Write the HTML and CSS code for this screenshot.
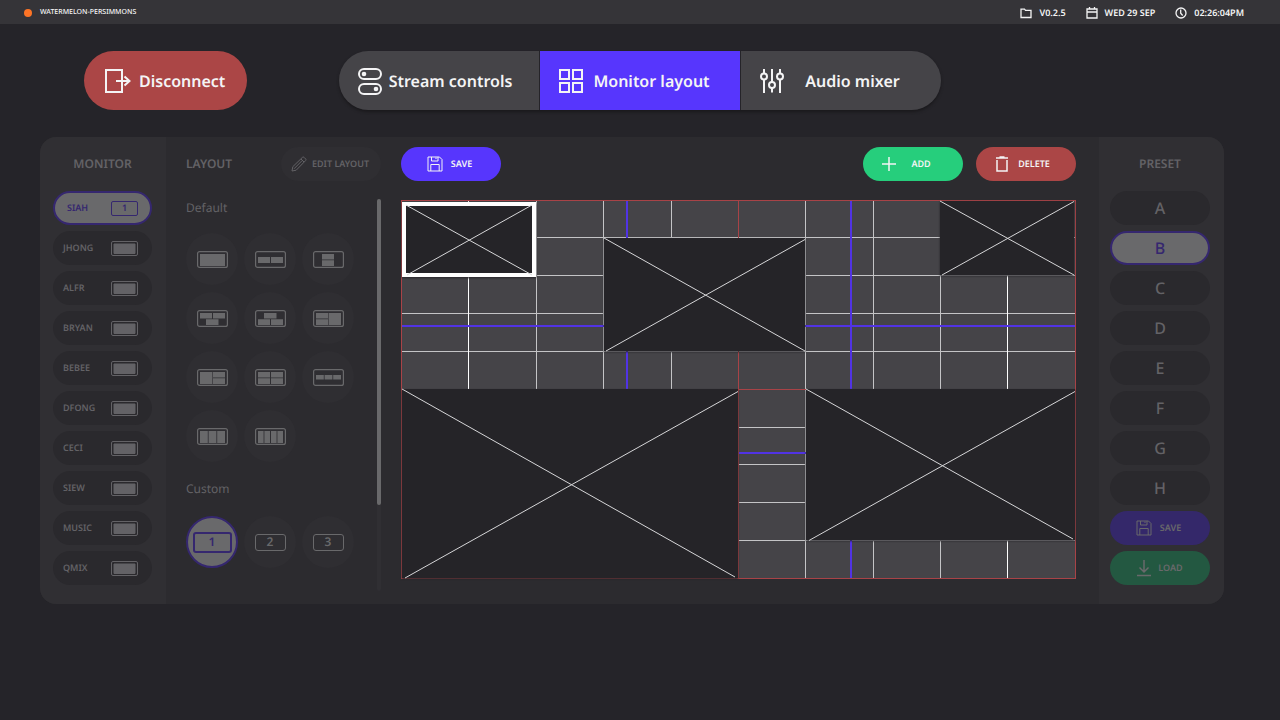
FILE: index.html
```html
<!DOCTYPE html>
<html lang="en">
<head>
<meta charset="utf-8">
<meta name="viewport" content="width=device-width, initial-scale=1">
<title>Monitor layout</title>
<link rel="stylesheet" href="styles.css">
</head>
<body>
<svg class="sprite" aria-hidden="true">
  <symbol id="screen" viewBox="0 0 27 15"><rect x=".5" y=".5" width="26" height="14" rx="1.5" fill="none" stroke="currentColor"/><path d="M3 3h21v9.500H3z" fill="currentColor"/></symbol>
  <symbol id="frame" viewBox="0 0 31 17"><rect x=".6" y=".6" width="29.800" height="15.800" rx="2" fill="none" stroke="currentColor" stroke-width="1.200"/></symbol>
  <symbol id="save" viewBox="0 0 16 16"><path d="M1 1h11.500L15 3.500V15H1zM4.500 1v4h6.500V1M9 1.500v1.500M3.800 15V8.500h8.400V15" fill="none" stroke="currentColor"/></symbol>
  <symbol id="pencil" viewBox="0 0 16 16"><path d="M1 15l.8-4.300L11.500 1.300q.8-.6 1.500 0l1.700 1.700q.7.8 0 1.500L5.200 14.200zM10 3l3 3M11.200 4.500L3 12.800" fill="none" stroke="currentColor"/></symbol>
</svg>

<header class="topbar">
  <span class="dot"></span>
  <span class="room">WATERMELON-PERSIMMONS</span>
  <span class="status"><svg width="12" height="12" viewBox="0 0 12 12"><path d="M1 2.200h3.500l1 1.200H11v7.100H1z"/></svg>V0.2.5</span>
  <span class="status"><svg width="12" height="12" viewBox="0 0 12 12"><path d="M1 2h10v9H1zM1 5h10M3.500 0v2M8.500 0v2"/></svg>WED 29 SEP</span>
  <span class="status"><svg width="12" height="12" viewBox="0 0 12 12"><circle cx="6" cy="6" r="5"/><path d="M5.700 2.500v3.700l2 2.300"/></svg>02:26:04PM</span>
</header>

<div class="actions">
  <button class="disconnect" type="button"><svg width="26" height="26" viewBox="0 0 26 26"><path d="M1 2h16v22H1zM11 13h13.500M19.500 8.500L24.500 13l-5 4.500"/></svg>Disconnect</button>
  <nav class="tabs">
    <button class="tab" type="button"><svg width="24" height="28" viewBox="0 0 24 28"><rect x="1" y="2" width="22" height="10" rx="5"/><rect x="1" y="17" width="22" height="10" rx="5"/><circle class="solid" cx="6" cy="7" r="2.300"/><circle class="solid" cx="18" cy="22" r="2.300"/></svg><span>Stream controls</span></button>
    <button class="tab active" type="button"><svg width="24" height="24" viewBox="0 0 24 24"><path d="M1 1h9v9H1zM14 1h9v9h-9zM1 14h9v9H1zM14 14h9v9h-9z"/></svg><span>Monitor layout</span></button>
    <button class="tab" type="button"><svg width="24" height="26" viewBox="0 0 24 26"><path d="M4 1v4.500M4 11.500V25M12 1v13M12 20v4.500M20 1v4.500M20 11.500V25"/><circle cx="4" cy="8.500" r="3"/><circle cx="12" cy="17" r="3"/><circle cx="20" cy="8.500" r="3"/></svg><span>Audio mixer</span></button>
  </nav>
</div>

<main class="panel">
  <section class="side monitors">
    <h2>MONITOR</h2>
    <button class="pill selected" type="button">SIAH<span class="number">1</span></button>
    <button class="pill" type="button">JHONG<svg width="27" height="15"><use href="#screen"/></svg></button>
    <button class="pill" type="button">ALFR<svg width="27" height="15"><use href="#screen"/></svg></button>
    <button class="pill" type="button">BRYAN<svg width="27" height="15"><use href="#screen"/></svg></button>
    <button class="pill" type="button">BEBEE<svg width="27" height="15"><use href="#screen"/></svg></button>
    <button class="pill" type="button">DFONG<svg width="27" height="15"><use href="#screen"/></svg></button>
    <button class="pill" type="button">CECI<svg width="27" height="15"><use href="#screen"/></svg></button>
    <button class="pill" type="button">SIEW<svg width="27" height="15"><use href="#screen"/></svg></button>
    <button class="pill" type="button">MUSIC<svg width="27" height="15"><use href="#screen"/></svg></button>
    <button class="pill" type="button">QMIX<svg width="27" height="15"><use href="#screen"/></svg></button>
  </section>

  <section class="layouts">
    <div class="layouts-head">
      <h2>LAYOUT</h2>
      <button class="btn edit" type="button"><svg width="16" height="16"><use href="#pencil"/></svg><span>EDIT LAYOUT</span></button>
    </div>
    <div class="layouts-body">
      <div class="groups">
        <h3>Default</h3>
        <div class="choices">
          <button class="choice" type="button" aria-label="Full screen"><svg width="31" height="17"><use href="#frame"/><path d="M3 3h25v12H3z"/></svg></button>
          <button class="choice" type="button" aria-label="Two side by side"><svg width="31" height="17"><use href="#frame"/><path d="M3 6h12v6H3zM16 6h12v6H16z"/></svg></button>
          <button class="choice" type="button" aria-label="Two stacked"><svg width="31" height="17"><use href="#frame"/><path d="M9 3h12v5.500H9zM9 9.200h12V15H9z"/></svg></button>
          <button class="choice" type="button" aria-label="Two over one"><svg width="31" height="17"><use href="#frame"/><path d="M3 3h12v5.500H3zM16 3h12v5.500H16zM9 9.200h12.500V15H9z"/></svg></button>
          <button class="choice" type="button" aria-label="One over two"><svg width="31" height="17"><use href="#frame"/><path d="M9 3h12.500v5.500H9zM3 9.200h12V15H3zM16 9.200h12V15H16z"/></svg></button>
          <button class="choice" type="button" aria-label="Two left, one right"><svg width="31" height="17"><use href="#frame"/><path d="M3 3h12v5.500H3zM3 9.200h12V15H3zM15.600 3H28v12H15.600z"/></svg></button>
          <button class="choice" type="button" aria-label="One left, two right"><svg width="31" height="17"><use href="#frame"/><path d="M3 3h12.400v12H3zM16 3h12v5.500H16zM16 9.200h12V15H16z"/></svg></button>
          <button class="choice" type="button" aria-label="Two by two"><svg width="31" height="17"><use href="#frame"/><path d="M3 3h12v5.500H3zM3 9.200h12V15H3zM16 3h12v5.500H16zM16 9.200h12V15H16z"/></svg></button>
          <button class="choice" type="button" aria-label="Three in a strip"><svg width="31" height="17"><use href="#frame"/><path d="M3 6h7.800v4.500H3zM11.600 6h7.800v4.500h-7.800zM20.200 6H28v4.500h-7.800z"/></svg></button>
          <button class="choice" type="button" aria-label="Three columns"><svg width="31" height="17"><use href="#frame"/><path d="M3 3h7.800v12H3zM11.600 3h7.800v12h-7.800zM20.200 3H28v12h-7.800z"/></svg></button>
          <button class="choice" type="button" aria-label="Four columns"><svg width="31" height="17"><use href="#frame"/><path d="M3 3h5.600v12H3zM9.400 3H15v12H9.400zM16 3h5.600v12H16zM22.400 3H28v12h-5.600z"/></svg></button>
        </div>
        <h3>Custom</h3>
        <div class="choices">
          <button class="choice selected" type="button"><span class="number">1</span></button>
          <button class="choice" type="button"><span class="number">2</span></button>
          <button class="choice" type="button"><span class="number">3</span></button>
        </div>
      </div>
      <div class="scroll"><div class="thumb"></div></div>
    </div>
  </section>

  <section class="editor">
    <div class="toolbar">
      <button class="btn save" type="button"><svg width="16" height="16"><use href="#save"/></svg><span>SAVE</span></button>
      <button class="btn add" type="button"><svg width="16" height="16" viewBox="0 0 16 16"><path d="M8 1v14M1 8h14"/></svg><span>ADD</span></button>
      <button class="btn delete" type="button"><svg width="16" height="16" viewBox="0 0 16 16"><path d="M3 4v11h10V4M2 2h12M5.500 1h5"/></svg><span>DELETE</span></button>
    </div>
    <svg class="canvas" viewBox="0 0 675 379" role="img" aria-label="Layout canvas">
      <rect class="field" width="675" height="379"/>
      <g class="lines" shape-rendering="crispEdges">
        <path class="grid" d="M135.500 0v379M202.500 0v379M270.500 0v379M404.500 0v379M472.500 0v379M539.500 0v379M0 37.500h675M0 75.500h675M0 113.500h675M0 151.500h675M0 227.500h675M0 264.500h675M0 302.500h675M0 340.500h675"/>
        <path class="grid bright" d="M67.500 0v379M606.500 0v379"/>
        <path class="guide" d="M226 0v379M450 0v379M0 126h675M0 252.500h675"/>
        <path class="axis" d="M337.500 0v379M.5.5h674v378H.5z"/>
      </g>
      <g class="boxes">
        <rect x="203" y="38" width="201" height="113"/>
        <path d="M203 38L404 151M404 39.500L205 151"/>
        <rect x="539" y="1" width="134" height="74"/>
        <path d="M539 1L673 75M673 1.500L541 75"/>
        <rect x="1" y="189" width="336" height="189"/>
        <path d="M1 189L334 377M337 191.500L4 378"/>
        <rect x="405" y="189" width="269" height="151"/>
        <path d="M405 189L672 339M674 191.500L408 340.500"/>
      </g>
      <path class="axis" d="M338 189.500h67" shape-rendering="crispEdges"/>
      <g class="boxes picked">
        <rect x="3" y="4" width="130" height="71"/>
        <path d="M5 5L131 75M131 5L6 75"/>
      </g>
    </svg>
  </section>

  <section class="side presets">
    <h2>PRESET</h2>
    <button class="pill" type="button">A</button>
    <button class="pill selected" type="button">B</button>
    <button class="pill" type="button">C</button>
    <button class="pill" type="button">D</button>
    <button class="pill" type="button">E</button>
    <button class="pill" type="button">F</button>
    <button class="pill" type="button">G</button>
    <button class="pill" type="button">H</button>
    <button class="btn save dim" type="button"><svg width="16" height="16"><use href="#save"/></svg><span>SAVE</span></button>
    <button class="btn load dim" type="button"><svg width="16" height="18" viewBox="0 0 16 18"><path d="M8 1v12M3.500 8.500L8 13l4.500-4.500M1 16.500h14"/></svg><span>LOAD</span></button>
  </section>
</main>
</body>
</html>
```
FILE: styles.css
```css
* { box-sizing: border-box; }

:root {
  --page: #252429;
  --panel: #2c2b2f;
  --side: #302f33;
  --dim: #636266;
  --dim-fill: #69696b;
  --purple: #5736fd;
  --purple-dim: #35276f;
  --red: #ab4646;
  --green: #26ce7c;
}

body {
  margin: 0;
  min-height: 100vh;
  background: var(--page);
  color: #f4f4f5;
  font: 600 9px/16px "Noto Sans", sans-serif;
  text-rendering: geometricPrecision;
}

button {
  border: 0;
  padding: 0;
  background: none;
  color: inherit;
  font: inherit;
  text-rendering: inherit;
  cursor: pointer;
}

h2, h3 { margin: 0; color: var(--dim); }
h2 { font-size: 12px; font-weight: 600; }
h3 { font-size: 12px; font-weight: 400; }

svg { fill: none; stroke: currentColor; flex: none; display: block; }

.sprite { position: absolute; width: 0; height: 0; }

.topbar {
  display: flex;
  align-items: center;
  height: 24px;
  padding: 1px 36px 0 24px;
  background: #353438;
}
.dot { width: 8px; height: 8px; border-radius: 50%; background: #fd7426; }
.room { margin: 0 auto 0 8px; font-size: 7px; font-weight: 500; }
.status { display: flex; align-items: center; gap: 7px; margin-left: 20px; }
.status svg { stroke-width: 1.3; }

.actions {
  display: grid;
  grid-template-columns: 1fr auto 1fr;
  padding: 27px 0;
  font-size: 16px;
}
.disconnect {
  display: flex;
  align-items: center;
  gap: 8px;
  height: 59px;
  margin-left: 84px;
  padding: 0 22px 0 21px;
  border-radius: 30px;
  background: var(--red);
  justify-self: start;
}
.disconnect svg, .tab svg { stroke-width: 2; }

.tabs {
  display: grid;
  grid-template-columns: repeat(3, 200px);
  gap: 1px;
  border-radius: 30px;
  overflow: hidden;
  box-shadow: 0 2px 3px #1a191c;
}
.tab {
  display: flex;
  align-items: center;
  height: 59px;
  padding: 0 20px 0 19px;
  background: #454448;
}
.tab span, .btn span { flex: 1; text-align: center; white-space: nowrap; }
.tab.active { background: var(--purple); }
.solid { fill: currentColor; stroke: none; }

.panel {
  display: grid;
  grid-template-columns: 126px 224px 1fr 125px;
  margin: 0 56px 40px 40px;
  border-radius: 16px;
  overflow: hidden;
  background: var(--panel);
}

.side {
  display: flex;
  flex-direction: column;
  gap: 6px;
  padding: 19px 14px 19px 13px;
  background: var(--side);
}
.side h2 { margin-bottom: 13px; text-align: center; }
.side.presets { padding-left: 11px; }

.pill {
  display: flex;
  align-items: center;
  justify-content: space-between;
  height: 34px;
  padding: 0 14px 0 10px;
  border-radius: 17px;
  background: #2a292d;
  color: var(--dim);
}
.pill.selected {
  padding: 0 12px;
  border: 2px solid var(--purple-dim);
  background: var(--dim-fill);
  color: var(--purple-dim);
}
.presets .pill { justify-content: center; padding: 0; font-size: 16px; font-weight: 500; }

.number {
  display: flex;
  align-items: center;
  justify-content: center;
  width: 27px;
  height: 15px;
  border: 1px solid currentColor;
  border-radius: 2px;
}

.btn {
  display: flex;
  align-items: center;
  width: 100px;
  height: 34px;
  padding: 0 18px;
  border-radius: 17px;
}
.btn.save, .btn.load { padding: 0 21px 0 26px; }
.save { background: var(--purple); }
.add { background: var(--green); }
.delete { background: var(--red); }
.add svg, .delete svg, .load svg { stroke-width: 1.5; }
.dim { color: var(--dim-fill); }
.save.dim { background: #34286a; }
.load.dim { background: #235841; }

.layouts { display: flex; flex-direction: column; padding: 10px 9px 13px 20px; }
.layouts-head { display: flex; align-items: center; justify-content: space-between; }
.btn.edit { padding: 0 7px 0 10px; background: #2f2e32; color: var(--dim); }
.layouts-body { display: flex; flex: 1; justify-content: space-between; padding-top: 18px; }
.groups h3 { margin: 1px 0 17px; }
.groups .choices + h3 { margin: 19px 0; }
.choices { display: grid; grid-template-columns: repeat(3, 52px); gap: 7px 6px; }
.choice {
  display: flex;
  align-items: center;
  justify-content: center;
  height: 52px;
  border-radius: 50%;
  background: #2f2e32;
  color: var(--dim-fill);
}
.choice path { fill: currentColor; stroke: none; }
.choice .number { width: 31px; height: 17px; border-radius: 3px; font-size: 12px; }
.choice.selected {
  border: 2px solid var(--purple-dim);
  background: var(--dim-fill);
  color: var(--purple-dim);
}
.choice.selected .number { width: 39px; height: 21px; border-width: 2px; }

.scroll { width: 4px; border-radius: 2px; background: #302f33; }
.thumb { height: 78%; border-radius: 2px; background: var(--dim-fill); }

.editor { padding: 10px 23px 24px 11px; }
.toolbar { display: flex; gap: 13px; margin: 0 0 19px; }
.toolbar .save { margin-right: auto; }

.canvas { width: 100%; overflow: visible; }
.field { fill: #454448; stroke: none; }
.grid { stroke: #c4c4c6; }
.bright { stroke: #fff; }
.guide { stroke: #5133e4; stroke-width: 2; }
.axis { stroke: #a84347; }
.boxes rect { fill: #252428; stroke: none; filter: drop-shadow(0 1px 1px #252428); }
.boxes path { stroke: #d6d6d8; }
.boxes.picked rect { stroke: #fff; stroke-width: 4; }
```
